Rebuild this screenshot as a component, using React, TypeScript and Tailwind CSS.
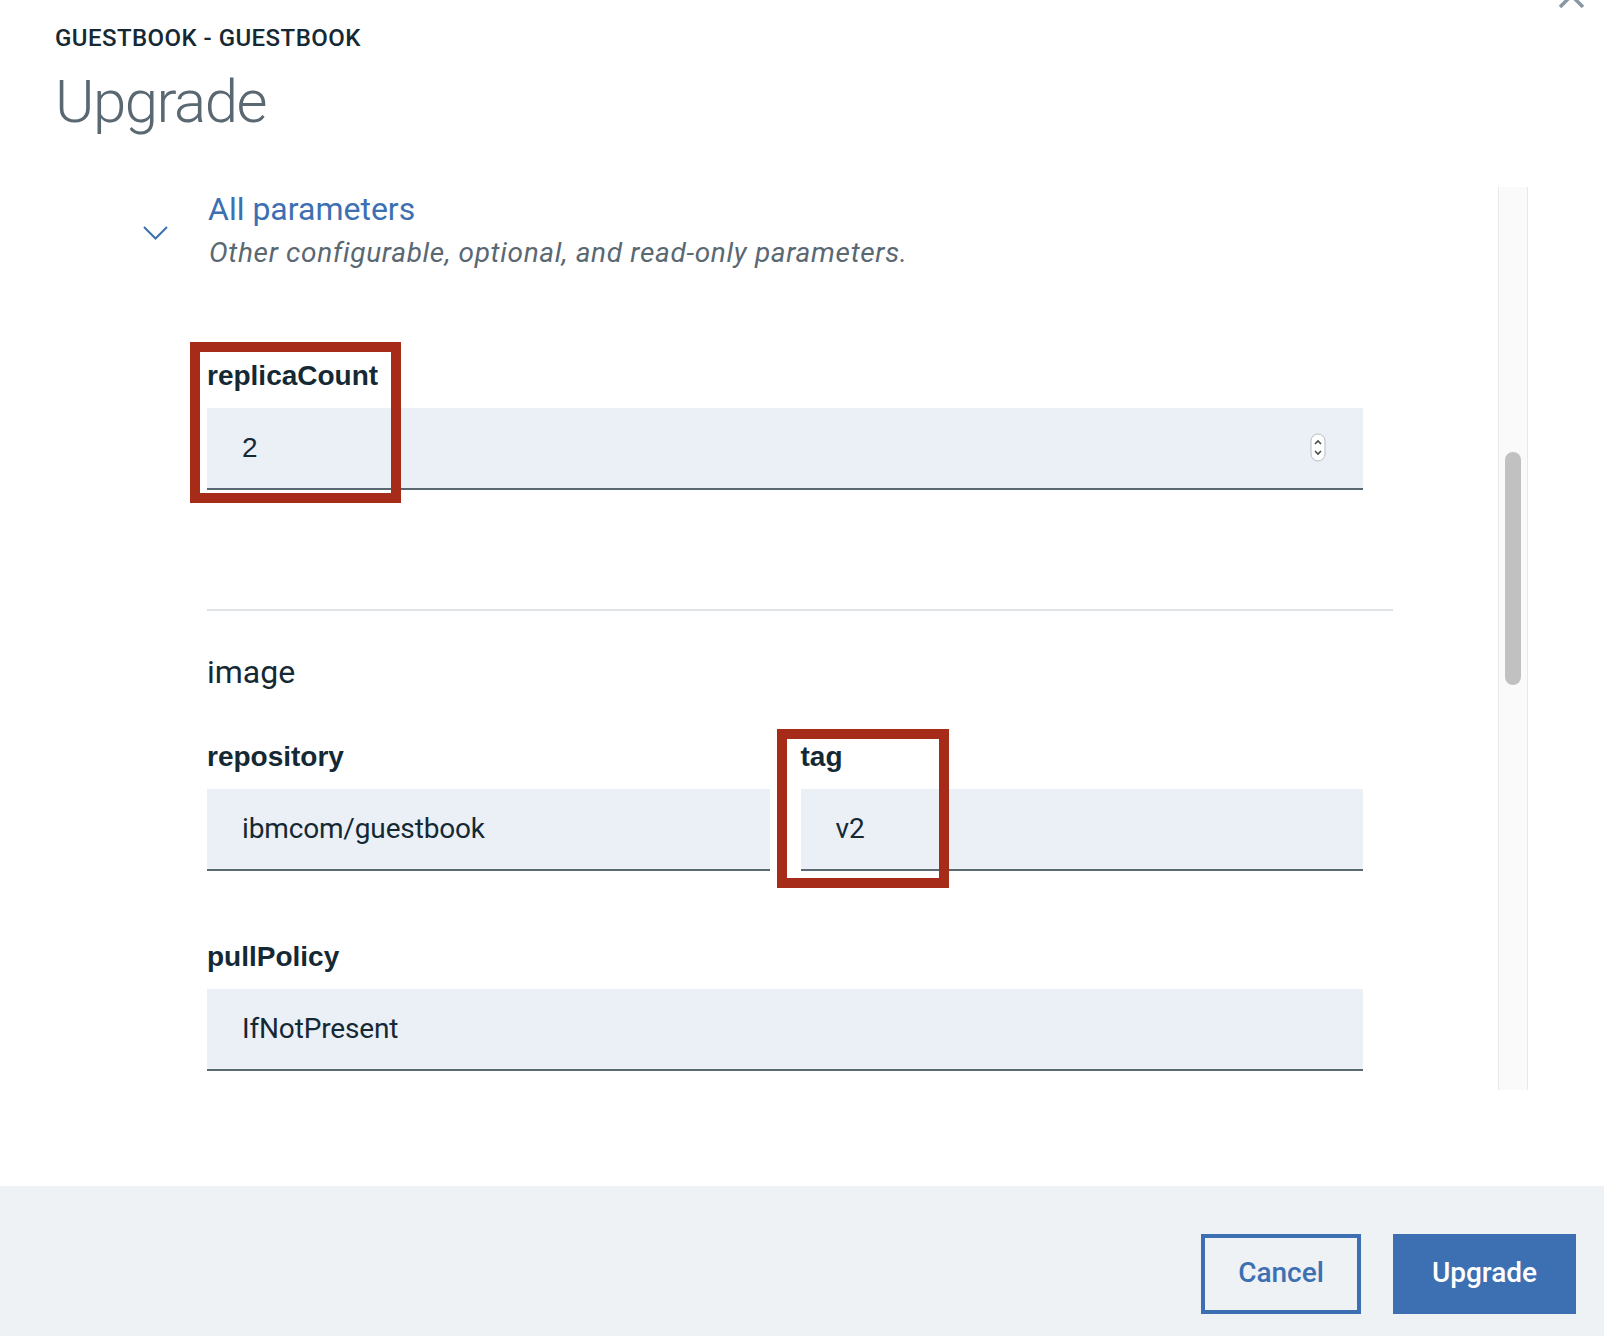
import type { ReactNode } from "react";

const plex = "font-['Roboto','Noto_Sans',sans-serif]";
const helv = "font-['Liberation_Sans','Arial',sans-serif]";

function Field({
  label,
  value,
  className = "",
  numeric = false,
  children,
}: {
  label: string;
  value: string;
  className?: string;
  numeric?: boolean;
  children?: ReactNode;
}) {
  return (
    <div className={`relative ${className}`}>
      <label className={`${helv} block text-[28px] font-bold leading-[36px] text-[#152935]`}>{label}</label>
      <div className="mt-[14px] flex h-[82px] items-center justify-between border-b-2 border-[#5a6872] bg-[#ebf0f7] pl-[35px] pr-[37px]">
        <span className={`${numeric ? helv : plex} text-[28px] tracking-[-0.15px] text-[#152935]`}>{value}</span>
        {numeric && (
          <svg width="16" height="29" viewBox="0 0 16 29" className="mt-[-2px]">
            <rect x="1" y="1" width="14" height="27" rx="7" fill="#fff" stroke="#b9bdc2" />
            <path d="M5 11 L8 8 L11 11" fill="none" stroke="#4a4a4a" strokeWidth="1.6" />
            <path d="M5 18 L8 21 L11 18" fill="none" stroke="#4a4a4a" strokeWidth="1.6" />
          </svg>
        )}
      </div>
      {children}
    </div>
  );
}

export default function App() {
  return (
    <div className={`${plex} relative flex h-[1336px] w-full flex-col overflow-hidden bg-white text-[#152935]`}>
      {/* close button, mostly cut off at the top */}
      <button className="absolute left-[1558px] top-[-18px]" aria-label="Close">
        <svg width="27" height="27" viewBox="0 0 27 27">
          <path d="M2 2 L25 25 M25 2 L2 25" stroke="#8897a2" strokeWidth="3.5" />
        </svg>
      </button>

      <header className="pl-[55px] pt-[24px]">
        <p className="text-[24px] font-medium leading-[28px] tracking-[0.45px]">GUESTBOOK - GUESTBOOK</p>
        <h1 className="mt-[14px] text-[60px] font-light leading-[72px] tracking-[-1.5px] text-[#5a6872]">Upgrade</h1>
      </header>

      {/* scroll area */}
      <div className="mt-[49px] flex h-[903px]">
        <div className="flex flex-1 overflow-hidden pl-[141px]">
          <div className="w-[66px] pt-[39px] pl-[2px]">
            <svg width="25" height="14" viewBox="0 0 25 14">
              <path d="M1 1 L12.5 12.5 L24 1" fill="none" stroke="#3d70b2" strokeWidth="2" />
            </svg>
          </div>
          <div className="w-[1186px] pt-[2px]">
            <h2 className="pl-[1px] text-[32px] leading-[40px] text-[#3d70b2]">All parameters</h2>
            <p className="mt-[6px] pl-[2px] text-[28px] italic leading-[36px] tracking-[0.68px] text-[#5a6872]">
              Other configurable, optional, and read-only parameters.
            </p>

            <Field label="replicaCount" value="2" numeric className="mt-[87px] w-[1156px]">
              <div className="pointer-events-none absolute left-[-17px] top-[-16px] h-[161px] w-[211px] border-[10px] border-[#a62b18]" />
            </Field>

            <div className="mt-[119px] h-[2px] w-full bg-[#dfe3e6]" />

            <p className="mt-[41px] text-[32px] leading-[40px] text-[#152935]">image</p>

            <div className="mt-[47px] flex w-[1156px] gap-[31px]">
              <Field label="repository" value="ibmcom/guestbook" className="flex-1" />
              <Field label="tag" value="v2" className="flex-1">
                <div className="pointer-events-none absolute left-[-24px] top-[-10px] h-[159px] w-[172px] border-[10px] border-[#a62b18]" />
              </Field>
            </div>

            <Field label="pullPolicy" value="IfNotPresent" className="mt-[68px] w-[1156px]" />
          </div>
        </div>

        {/* scrollbar */}
        <div className="mr-[76px] w-[30px] border-x border-[#e8e8e8] bg-[#fafafa] pt-[265px]">
          <div className="mx-auto h-[233px] w-[16px] rounded-full bg-[#c1c1c1]" />
        </div>
      </div>

      <div className="flex-1" />

      <footer className="flex h-[150px] items-start justify-end gap-[32px] bg-[#eef2f5] pr-[28px] pt-[48px]">
        <button className="flex h-[80px] w-[160px] items-center justify-center border-4 border-[#3d70b2] pb-[2px] text-[28px] font-medium text-[#3d70b2]">
          Cancel
        </button>
        <button className="flex h-[80px] w-[183px] items-center justify-center bg-[#3d70b2] pb-[2px] text-[28px] font-medium text-white">
          Upgrade
        </button>
      </footer>
    </div>
  );
}
